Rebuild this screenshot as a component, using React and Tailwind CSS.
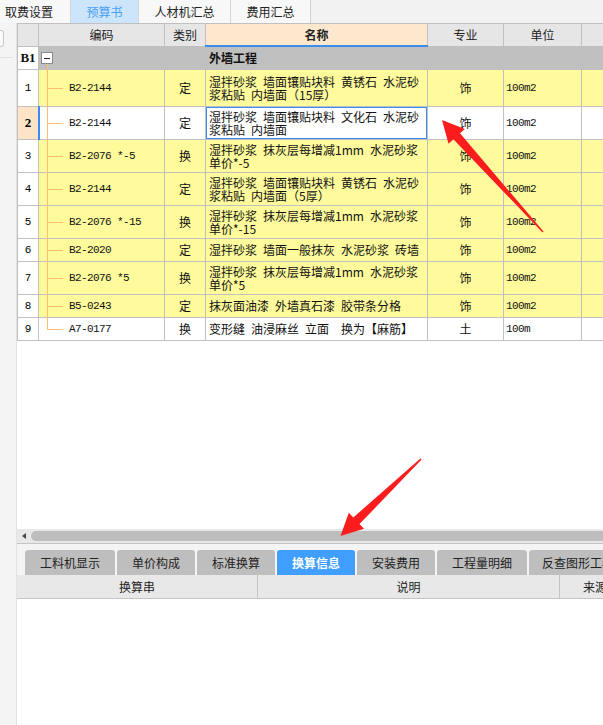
import React from 'react';

const B = '\u2002';
const sp = (s) => s.split(' ').join(B);

const rows = [
  { n: '1', code: 'B2-2144', type: '定', name: ['湿拌砂浆 墙面镶贴块料 黄锈石 水泥砂', '浆粘贴 内墙面（15厚）'], major: '饰', unit: '100m2', h: 'h-[37px]', yellow: true },
  { n: '2', code: 'B2-2144', type: '定', name: ['湿拌砂浆 墙面镶贴块料 文化石 水泥砂', '浆粘贴 内墙面'], major: '饰', unit: '100m2', h: 'h-[33px]', yellow: false, sel: true },
  { n: '3', code: 'B2-2076 *-5', type: '换', name: ['湿拌砂浆 抹灰层每增减1mm 水泥砂浆', '单价*-5'], major: '饰', unit: '100m2', h: 'h-[33px]', yellow: true },
  { n: '4', code: 'B2-2144', type: '定', name: ['湿拌砂浆 墙面镶贴块料 黄锈石 水泥砂', '浆粘贴 内墙面（5厚）'], major: '饰', unit: '100m2', h: 'h-[33px]', yellow: true },
  { n: '5', code: 'B2-2076 *-15', type: '换', name: ['湿拌砂浆 抹灰层每增减1mm 水泥砂浆', '单价*-15'], major: '饰', unit: '100m2', h: 'h-[33px]', yellow: true },
  { n: '6', code: 'B2-2020', type: '定', name: ['湿拌砂浆 墙面一般抹灰 水泥砂浆 砖墙'], major: '饰', unit: '100m2', h: 'h-[23px]', yellow: true },
  { n: '7', code: 'B2-2076 *5', type: '换', name: ['湿拌砂浆 抹灰层每增减1mm 水泥砂浆', '单价*5'], major: '饰', unit: '100m2', h: 'h-[33px]', yellow: true },
  { n: '8', code: 'B5-0243', type: '定', name: ['抹灰面油漆 外墙真石漆 胶带条分格'], major: '饰', unit: '100m2', h: 'h-[23px]', yellow: true },
  { n: '9', code: 'A7-0177', type: '换', name: ['变形缝 油浸麻丝 立面  换为【麻筋】'], major: '土', unit: '100m', h: 'h-[23px]', yellow: false, last: true },
];

const CJK = "font-['Noto_Sans_CJK_SC',sans-serif]";
const MONO = "font-['Liberation_Mono','Noto_Sans_CJK_SC',monospace]";

function DataRow({ r }) {
  const bg = r.yellow ? 'bg-[#fffb9c]' : 'bg-white';
  return (
    <div className={`flex border-b border-[#c0c0c0] ${r.h} ${bg}`}>
      <div
        className={`w-[21px] shrink-0 border-r border-[#c0c0c0] flex items-center justify-center ${
          r.sel
            ? "bg-[#fde4c6] font-bold font-['Liberation_Serif',serif] text-[13px]"
            : "bg-white font-['Liberation_Mono',monospace] text-[11px]"
        }`}
      >
        {r.n}
      </div>
      <div className="relative w-[126px] shrink-0 border-r border-[#c0c0c0] flex items-center pl-[30px]">
        <span className={`absolute left-[8px] top-0 w-px bg-[#ffbe72] ${r.last ? 'h-1/2' : 'bottom-[-1px]'}`} />
        <span className="absolute left-[8px] top-1/2 w-[16px] h-px bg-[#ffbe72]" />
        {r.sel && <span className="absolute left-[-1px] top-[-1px] bottom-[-1px] w-[2px] bg-[#3b8ded]" />}
        <span className={`${MONO} text-[11px] tracking-[-0.6px] text-[#111] whitespace-pre`}>{r.code}</span>
      </div>
      <div className={`w-[41px] shrink-0 border-r border-[#c0c0c0] flex items-center justify-center text-[12px] ${CJK} text-[#111]`}>
        {r.type}
      </div>
      <div className={`relative w-[222px] shrink-0 border-r border-[#c0c0c0] flex flex-col justify-center pl-[3px] text-[12px] leading-[13.5px] ${CJK} text-[#111] overflow-hidden`}>
        {r.name.map((l, i) => (
          <div key={i} className="whitespace-pre">{sp(l)}</div>
        ))}
        {r.sel && <span className="absolute -left-px -top-px -right-px -bottom-px border-2 border-[#3b8ded]" />}
      </div>
      <div className={`w-[76px] shrink-0 border-r border-[#c0c0c0] flex items-center justify-center text-[12px] ${CJK} text-[#111]`}>
        {r.major}
      </div>
      <div className="w-[78px] shrink-0 border-r border-[#c0c0c0] flex items-center pl-[2px]">
        <span className={`${MONO} text-[11px] tracking-[-0.6px] text-[#111]`}>{r.unit}</span>
      </div>
      <div className="flex-1" />
    </div>
  );
}

function HeaderCell({ w, children, className = '' }) {
  return (
    <div className={`${w} shrink-0 border-r border-[#c0c0c0] flex items-center justify-center ${className}`}>{children}</div>
  );
}

const bottomTabs = [
  { t: '工料机显示', w: 'w-[90px]' },
  { t: '单价构成', w: 'w-[78px]' },
  { t: '标准换算', w: 'w-[78px]' },
  { t: '换算信息', w: 'w-[78px]', active: true },
  { t: '安装费用', w: 'w-[78px]' },
  { t: '工程量明细', w: 'w-[90px]' },
  { t: '反查图形工程量', w: 'w-[110px]' },
];

export default function App() {
  return (
    <div className={`relative w-[603px] h-[725px] overflow-hidden bg-white flex flex-col ${CJK}`}>
      {/* top tabs */}
      <div className="h-[23px] shrink-0 flex bg-[#f2f2f2] text-[12px] text-[#222]">
        <div className="w-[71px] border-r border-[#d4d4d4] bg-[#f8f8f8] flex items-center pl-[5px]">取费设置</div>
        <div className="w-[68px] border-r border-[#d4d4d4] bg-[#cce5fa] text-[#48a0f2] flex items-center justify-center">预算书</div>
        <div className="w-[92px] border-r border-[#d4d4d4] bg-[#f8f8f8] flex items-center justify-center">人材机汇总</div>
        <div className="w-[80px] border-r border-[#cfcfcf] bg-[#f8f8f8] flex items-center justify-center">费用汇总</div>
        <div className="flex-1" />
      </div>

      <div className="flex-1 flex min-h-0">
        {/* left strip */}
        <div className="w-[17px] shrink-0 bg-[#f4f4f4] border-r border-[#e2e2e2] flex flex-col">
          <div className="mt-[7px] h-[17px] w-[4px] rounded-r-[3px] border border-l-0 border-[#c8c8c8] bg-[#fbfbfb]" />
          <div className="mt-[10px] h-px w-[13px] bg-[#e2e2e2]" />
        </div>

        {/* main */}
        <div className="flex-1 min-w-0 flex flex-col">
          {/* grid */}
          <div className="h-[506px] shrink-0 bg-white overflow-hidden">
            <div className="border-l border-t border-[#c0c0c0]">
              {/* header */}
              <div className="flex h-[23px] border-b border-[#c0c0c0] bg-[#e6e6e6] text-[12px] text-[#222]">
                <HeaderCell w="w-[21px]" />
                <HeaderCell w="w-[126px]">编码</HeaderCell>
                <HeaderCell w="w-[41px]">类别</HeaderCell>
                <HeaderCell w="w-[222px]" className="relative bg-[#fde8ce] font-bold">
                  名称
                  <span className="absolute left-[-1px] right-[-1px] bottom-[-1px] h-[2px] bg-[#3b8ded]" />
                </HeaderCell>
                <HeaderCell w="w-[76px]">专业</HeaderCell>
                <HeaderCell w="w-[78px]">单位</HeaderCell>
                <div className="flex-1" />
              </div>
              {/* B1 row */}
              <div className="flex h-[23px] border-b border-[#c0c0c0] bg-[#c0c0c0]">
                <div className="w-[21px] shrink-0 border-r border-[#c0c0c0] bg-white flex items-center justify-center font-['Liberation_Serif',serif] font-bold text-[13px] text-[#111]">
                  B1
                </div>
                <div className="relative w-[126px] shrink-0 border-r border-[#c0c0c0] flex items-center pl-[2px]">
                  <span className="absolute left-[8px] top-[17px] bottom-[-1px] w-px bg-[#ffbe72]" />
                  <span className="w-[12px] h-[12px] border border-[#8a8a8a] bg-white flex items-center justify-center">
                    <span className="w-[6px] h-px bg-[#222]" />
                  </span>
                </div>
                <div className="w-[41px] shrink-0 border-r border-[#c0c0c0]" />
                <div className="w-[222px] shrink-0 border-r border-[#c0c0c0] flex items-center pl-[3px] text-[12px] font-bold text-[#111]">
                  外墙工程
                </div>
                <div className="w-[76px] shrink-0 border-r border-[#c0c0c0]" />
                <div className="w-[78px] shrink-0 border-r border-[#c0c0c0]" />
                <div className="flex-1" />
              </div>
              {rows.map((r) => (
                <DataRow key={r.n} r={r} />
              ))}
            </div>
          </div>

          {/* scrollbar */}
          <div className="h-[14px] shrink-0 bg-[#e8e8e8] flex items-start pt-[2px] pl-[5px] overflow-hidden">
            <span className="mt-[2px] w-0 h-0 border-y-[3.5px] border-y-transparent border-r-[4px] border-r-[#444]" />
            <span className="ml-[5px] flex-1 h-[10px] rounded-full bg-[#bdbdbd] mr-[-20px]" />
          </div>

          {/* bottom tabs */}
          <div className="h-[32px] shrink-0 border-t border-[#c4c4c4] bg-[#f4f4f4] flex items-end pl-[8px] gap-[2px] overflow-hidden">
            {bottomTabs.map((t) => (
              <div
                key={t.t}
                className={`${t.w} h-[25px] shrink-0 rounded-t-[3px] flex items-center justify-center text-[12px] ${
                  t.active ? 'bg-[#409eff] text-white font-bold' : 'bg-[#bebebe] text-[#222]'
                }`}
              >
                {t.t}
              </div>
            ))}
          </div>

          {/* bottom header */}
          <div className="h-[24px] shrink-0 flex bg-[#e8e8e8] border-b border-[#c4c4c4] text-[12px] text-[#222] overflow-hidden">
            <div className="w-[241px] shrink-0 border-r border-[#c4c4c4] flex items-center justify-center">换算串</div>
            <div className="w-[302px] shrink-0 border-r border-[#c4c4c4] flex items-center justify-center">说明</div>
            <div className="w-[70px] shrink-0 flex items-center justify-center">来源</div>
          </div>

          <div className="flex-1 bg-white" />
        </div>
      </div>

      {/* red annotation arrows */}
      <svg className="absolute inset-0 pointer-events-none" width="603" height="725" viewBox="0 0 603 725">
        <polygon
          fill="#fb1d1d"
          points="442,120 464.9,128.9 460,133.3 543.5,231.6 542.5,232.4 453.4,139.3 448.5,143.7"
        />
        <polygon
          fill="#fb1d1d"
          points="340.5,536 364,528.8 359.5,524.1 421.6,459.6 420.4,458.4 353.3,517.5 348.8,512.8"
        />
      </svg>
    </div>
  );
}
